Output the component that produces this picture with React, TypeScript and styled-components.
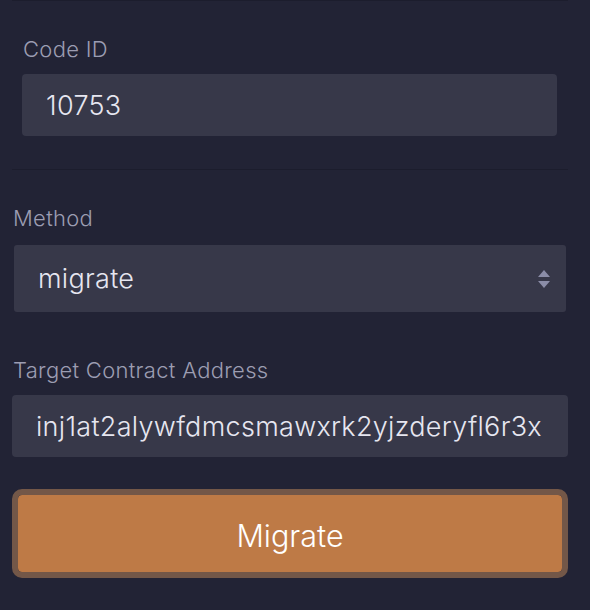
import React, { useState } from 'react';
import styled, { createGlobalStyle } from 'styled-components';

const GlobalStyle = createGlobalStyle`
  html, body {
    margin: 0;
    padding: 0;
    background: #222335;
  }

  body {
    font-family: Inter, 'Noto Sans', 'Liberation Sans', sans-serif;
    -webkit-font-smoothing: antialiased;
  }
`;

const Page = styled.div`
  min-height: 610px;
  padding: 0 22px 0 12px;
  background: #222335;
  box-sizing: border-box;
`;

const CodeSection = styled.section`
  display: flex;
  flex-direction: column;
  padding: 36px 11px 33px 10px;
  border-top: 1px solid #1c1d2d;
  border-bottom: 1px solid #1c1d2d;
`;

const Form = styled.form`
  display: flex;
  flex-direction: column;
  padding-top: 36px;
`;

const Field = styled.div<{ $gap: number; $spaceAfter: number }>`
  display: flex;
  flex-direction: column;
  gap: ${props => props.$gap}px;
  margin-bottom: ${props => props.$spaceAfter}px;
`;

const Label = styled.label`
  padding-left: 1px;
  font-size: 22px;
  font-weight: 300;
  line-height: 25px;
  letter-spacing: 0.3px;
  color: #9c9db2;
`;

const TextInput = styled.input`
  height: 62px;
  width: 100%;
  box-sizing: border-box;
  padding: 0 24px;
  border: none;
  border-radius: 4px;
  background: #373849;
  color: #e6e6f0;
  font-family: inherit;
  font-size: 27px;
  font-weight: 300;
  letter-spacing: 0.3px;
  outline: none;
`;

const SelectWrap = styled.div`
  position: relative;
  margin: 0 2px;
`;

const Select = styled.select`
  appearance: none;
  -webkit-appearance: none;
  height: 67px;
  width: 100%;
  box-sizing: border-box;
  padding: 0 24px;
  border: none;
  border-radius: 3px;
  background: #373849;
  color: #e6e6f0;
  font-family: inherit;
  font-size: 27px;
  font-weight: 300;
  letter-spacing: 0.3px;
  outline: none;
`;

const Arrows = styled.svg`
  position: absolute;
  right: 15px;
  top: 50%;
  transform: translateY(-50%);
  pointer-events: none;
`;

const SubmitButton = styled.button`
  height: 89px;
  width: 100%;
  box-sizing: border-box;
  padding: 3px 0 0;
  border: 6px solid #735748;
  border-radius: 10px;
  background: #be7a46;
  background-clip: padding-box;
  color: #ffffff;
  font-family: inherit;
  font-size: 30.5px;
  font-weight: 300;
  cursor: pointer;
`;

const App: React.FC = () => {
  const [codeId, setCodeId] = useState('10753');
  const [method, setMethod] = useState('migrate');
  const [address, setAddress] = useState('inj1at2alywfdmcsmawxrk2yjzderyfl6r3x');

  return (
    <Page>
      <GlobalStyle />
      <CodeSection>
        <Field $gap={12} $spaceAfter={0}>
          <Label>Code ID</Label>
          <TextInput value={codeId} onChange={e => setCodeId(e.target.value)} />
        </Field>
      </CodeSection>
      <Form onSubmit={e => e.preventDefault()}>
        <Field $gap={14} $spaceAfter={46}>
          <Label>Method</Label>
          <SelectWrap>
            <Select value={method} onChange={e => setMethod(e.target.value)}>
              <option value="migrate">migrate</option>
            </Select>
            <Arrows width="14" height="24" viewBox="0 0 14 24">
              <path d="M7 3 L13 10 L1 10 Z" fill="#8b8da8" />
              <path d="M7 21 L13 14 L1 14 Z" fill="#8b8da8" />
            </Arrows>
          </SelectWrap>
        </Field>
        <Field $gap={12} $spaceAfter={32}>
          <Label>Target Contract Address</Label>
          <TextInput value={address} onChange={e => setAddress(e.target.value)} />
        </Field>
        <SubmitButton type="submit">Migrate</SubmitButton>
      </Form>
    </Page>
  );
};

export default App;
